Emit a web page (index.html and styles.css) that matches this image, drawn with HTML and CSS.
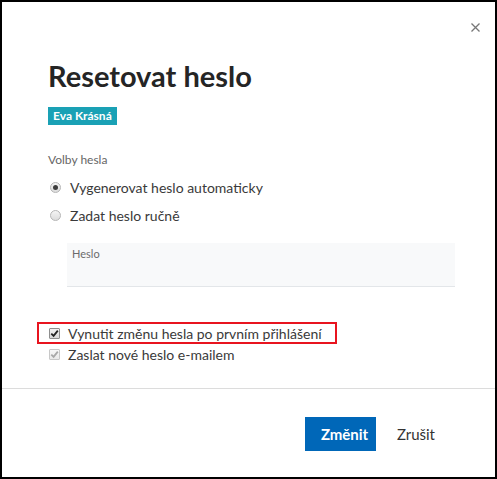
FILE: index.html
```html
<!DOCTYPE html>
<html lang="cs">
<head>
    <meta charset="UTF-8">
    <meta name="viewport" content="width=device-width, initial-scale=1.0">
    <title>Resetovat heslo</title>
    <link rel="stylesheet" href="styles.css">
</head>
<body>
    <div class="dialog">
        <div class="top">
            <button class="close" type="button" aria-label="Zavřít">
                <svg width="9" height="9" viewBox="0 0 9 9"><path d="M0.5 0.5 L8.5 8.5 M8.5 0.5 L0.5 8.5" stroke="#777" stroke-width="1.3" fill="none"/></svg>
            </button>
        </div>

        <div class="content">
            <h1 class="title">Resetovat heslo</h1>
            <span class="badge">Eva Krásná</span>

            <div class="group-label">Volby hesla</div>
            <label class="radio">
                <span class="radio-dot checked"></span>
                Vygenerovat heslo automaticky
            </label>
            <label class="radio">
                <span class="radio-dot"></span>
                Zadat heslo ručně
            </label>

            <div class="field">
                <span class="field-label">Heslo</span>
            </div>

            <div class="checks">
                <label class="check highlight">
                    <span class="box">
                        <svg width="9" height="9" viewBox="0 0 9 9"><path d="M1.3 4.6 L3.6 6.9 L7.8 1.6" stroke="#222" stroke-width="1.8" fill="none"/></svg>
                    </span>
                    Vynutit změnu hesla po prvním přihlášení
                </label>
                <label class="check disabled">
                    <span class="box">
                        <svg width="9" height="9" viewBox="0 0 9 9"><path d="M1.3 4.6 L3.6 6.9 L7.8 1.6" stroke="#a8a8a8" stroke-width="1.8" fill="none"/></svg>
                    </span>
                    Zaslat nové heslo e-mailem
                </label>
            </div>
        </div>

        <div class="footer">
            <button type="button" class="btn btn-primary">Změnit</button>
            <button type="button" class="btn btn-link">Zrušit</button>
        </div>
    </div>
</body>
</html>
```

FILE: styles.css
```css
* {
    box-sizing: border-box;
    font-family: 'Lato', 'Liberation Sans', sans-serif;
}

body {
    margin: 0;
}

.dialog {
    width: 497px;
    height: 479px;
    border: 2px solid #000;
    background: #fff;
    display: flex;
    flex-direction: column;
    color: #3a3a3a;
}

.top {
    height: 40px;
    display: flex;
    justify-content: flex-end;
    padding: 21px 15px 0 0;
}

.close {
    border: none;
    background: none;
    padding: 0;
    width: 9px;
    height: 9px;
    display: flex;
}

.content {
    padding-left: 46px;
    display: flex;
    flex-direction: column;
    align-items: flex-start;
}

.title {
    margin: 17px 0 0;
    font-size: 29px;
    line-height: 34px;
    font-weight: 700;
    color: #252525;
}

.badge {
    margin-top: 14px;
    height: 18px;
    line-height: 18px;
    padding: 0 5px;
    background-color: #1aa1b5;
    color: #fff;
    font-size: 12px;
    font-weight: 700;
}

.group-label {
    margin-top: 27px;
    font-size: 12px;
    line-height: 16px;
    color: #666;
}

.radio {
    height: 28px;
    display: flex;
    align-items: center;
    gap: 9px;
    font-size: 14px;
    padding-left: 2px;
}

.group-label + .radio {
    margin-top: 5px;
}

.radio-dot {
    width: 11px;
    height: 11px;
    border-radius: 50%;
    border: 1px solid #b5b5b5;
    background: linear-gradient(#f4f4f4, #dcdcdc);
    display: flex;
    align-items: center;
    justify-content: center;
}

.radio-dot.checked::after {
    content: '';
    width: 5px;
    height: 5px;
    border-radius: 50%;
    background: #3c3c3c;
}

.field {
    margin: 14px 0 0 19px;
    width: 388px;
    height: 44px;
    background: #f8f9fa;
    border-bottom: 1px solid #e3e6e9;
    padding: 4px 5px 0;
    font-size: 11px;
    line-height: 14px;
}

.field-label {
    color: #6b6b6b;
}

.checks {
    margin: 35px 0 0 -11px;
    display: flex;
    flex-direction: column;
}

.check {
    display: flex;
    align-items: center;
    gap: 8px;
    font-size: 14px;
    padding-left: 12px;
}

.check.highlight {
    width: 300px;
    height: 22px;
    border: 2px solid #e8141f;
    padding-left: 10px;
}

.check.disabled {
    height: 21px;
}

.box {
    width: 11px;
    height: 11px;
    border: 1px solid #8e8e8e;
    border-radius: 1px;
    background: linear-gradient(#f2f2f2, #d8d8d8);
    display: flex;
    align-items: center;
    justify-content: center;
}

.check.disabled .box {
    border-color: #c8c8c8;
    background: linear-gradient(#f7f7f7, #e9e9e9);
}

.footer {
    margin-top: auto;
    height: 89px;
    border-top: 1px solid #dcdcdc;
    display: flex;
    justify-content: flex-end;
    align-items: flex-start;
    padding: 28px 44px 0 0;
    gap: 5px;
}

.btn {
    height: 34px;
    border: none;
    font-size: 15px;
    padding: 0 16px;
}

.btn-primary {
    width: 71px;
    background-color: #0067b8;
    color: #fff;
    font-weight: 700;
}

.btn-link {
    background: none;
    color: #333;
}
```
